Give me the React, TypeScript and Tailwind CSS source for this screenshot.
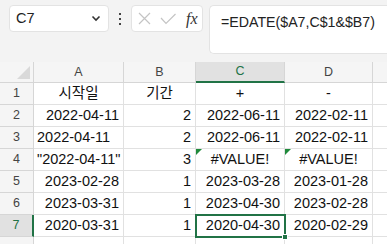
import React from "react";

const GREEN = "#217346";

type Cell = { v: string; align?: "left" | "right" | "center"; err?: boolean };

const rows: Cell[][] = [
  [{ v: "시작일", align: "center" }, { v: "기간", align: "center" }, { v: "+", align: "center" }, { v: "-", align: "center" }],
  [{ v: "2022-04-11", align: "right" }, { v: "2", align: "right" }, { v: "2022-06-11", align: "right" }, { v: "2022-02-11", align: "right" }],
  [{ v: "2022-04-11", align: "left" }, { v: "2", align: "right" }, { v: "2022-06-11", align: "right" }, { v: "2022-02-11", align: "right" }],
  [{ v: "\"2022-04-11\"", align: "left" }, { v: "3", align: "right" }, { v: "#VALUE!", align: "center", err: true }, { v: "#VALUE!", align: "center", err: true }],
  [{ v: "2023-02-28", align: "right" }, { v: "1", align: "right" }, { v: "2023-03-28", align: "right" }, { v: "2023-01-28", align: "right" }],
  [{ v: "2023-03-31", align: "right" }, { v: "1", align: "right" }, { v: "2023-04-30", align: "right" }, { v: "2023-02-28", align: "right" }],
  [{ v: "2020-03-31", align: "right" }, { v: "1", align: "right" }, { v: "2020-04-30", align: "right" }, { v: "2020-02-29", align: "right" }],
];

const widths = ["w-[90px]", "w-[72px]", "w-[89px]", "w-[88px]"];

const alignCls = (a?: string) =>
  a === "right" ? "justify-end pr-[4px]" : a === "center" ? "justify-center" : "justify-start pl-[3px]";

const TopBar = () => (
  <div className="h-[62px] bg-[#f3f3f3] relative flex items-start pt-[5px]">
    {/* name box */}
    <div className="ml-[9px] w-[100px] h-[27px] bg-white border border-[#e3e3e3] rounded-[4px] flex items-center pl-[6px] pr-[7px]">
      <span className="text-[14.5px] text-[#222]">C7</span>
      <svg className="ml-auto" width="10" height="7" viewBox="0 0 10 7">
        <path d="M1.5 1.5 L5 5 L8.5 1.5" fill="none" stroke="#333" strokeWidth="1.6" />
      </svg>
    </div>
    {/* dots */}
    <div className="w-[22px] h-[27px] flex flex-col items-center justify-center gap-[3px]">
      <span className="w-[2px] h-[2px] bg-[#444]" />
      <span className="w-[2px] h-[2px] bg-[#444]" />
      <span className="w-[2px] h-[2px] bg-[#444]" />
    </div>
    {/* buttons */}
    <div className="w-[72px] h-[27px] bg-white border border-[#e3e3e3] rounded-[4px] flex items-center pl-[6px] gap-[9px]">
      <svg width="13" height="13" viewBox="0 0 13 13">
        <path d="M1 1 L12 12 M12 1 L1 12" stroke="#c4c4c4" strokeWidth="1.2" />
      </svg>
      <svg width="16" height="12" viewBox="0 0 16 12">
        <path d="M1 5 L6 10.5 L15.5 1" fill="none" stroke="#c4c4c4" strokeWidth="1.2" />
      </svg>
      <span className="text-[16px] italic text-[#333] ml-[1px]" style={{ fontFamily: '"Liberation Serif", serif' }}>
        fx
      </span>
    </div>
    {/* formula input */}
    <div className="ml-[6px] flex-1 h-[49px] bg-white border border-r-0 border-[#e3e3e3] rounded-l-[5px] pl-[11px] pt-[4px]">
      <span className="text-[14.2px] text-[#222]">=EDATE($A7,C$1&amp;$B7)</span>
    </div>
  </div>
);

export default function App() {
  return (
    <div
      className="w-[387px] h-[244px] overflow-hidden bg-white"
      style={{ fontFamily: '"Liberation Sans", "Noto Sans CJK KR", sans-serif' }}
    >
      <TopBar />
      <div className="relative">
        {/* column header row */}
        <div className="flex h-[21px] bg-[#f5f5f5] text-[12.5px] text-[#444]">
          <div className="w-[34px] shrink-0 border-r border-b border-[#d6d6d6] relative">
            <svg className="absolute left-[17px] top-[4px]" width="13" height="13" viewBox="0 0 13 13">
              <path d="M13 0 L13 13 L0 13 Z" fill="#d9d9d9" />
            </svg>
          </div>
          {["A", "B", "C", "D"].map((c, i) => (
            <div
              key={c}
              className={`${widths[i]} shrink-0 border-r border-[#d6d6d6] flex items-center justify-center ${
                c === "C" ? "bg-[#e1e1e1] text-[#217346] border-b-2 border-b-[#217346]" : "border-b"
              }`}
            >
              {c}
            </div>
          ))}
          <div className="flex-1 border-b border-[#d6d6d6]" />
        </div>

        {rows.map((r, ri) => {
          const sel = ri === 6;
          return (
            <div key={ri} className="flex h-[22px]">
              <div
                className={`w-[34px] shrink-0 border-b border-[#d6d6d6] flex items-center justify-center text-[12.5px] ${
                  sel
                    ? "bg-[#e1e1e1] text-[#217346] border-r-2 border-r-[#217346]"
                    : "bg-[#f5f5f5] text-[#444] border-r"
                }`}
              >
                {ri + 1}
              </div>
              {r.map((c, ci) => (
                <div
                  key={ci}
                  className={`${widths[ci]} shrink-0 relative border-r border-b border-[#e1e1e1] flex items-center whitespace-nowrap text-[14.5px] text-[#111] ${alignCls(
                    c.align
                  )}`}
                >
                  {c.err && (
                    <svg className="absolute left-0 top-0" width="6" height="6" viewBox="0 0 6 6">
                      <path d="M0 0 L6 0 L0 6 Z" fill="#1f8a3b" />
                    </svg>
                  )}
                  <span className={ci === 0 && c.align === "left" ? "overflow-visible" : ""}>{c.v}</span>
                </div>
              ))}
              <div className="flex-1 border-b border-[#e1e1e1]" />
            </div>
          );
        })}
        <div className="flex h-[22px]">
          <div className="w-[34px] shrink-0 bg-[#f5f5f5] border-r border-[#d6d6d6]" />
          {widths.map((w, i) => (
            <div key={i} className={`${w} shrink-0 border-r border-[#e1e1e1]`} />
          ))}
        </div>

        {/* selection C7 */}
        <div
          className="absolute left-[195px] top-[152px] w-[91px] h-[24px] border-2 pointer-events-none"
          style={{ borderColor: GREEN }}
        />
        <div className="absolute left-[282px] top-[172px] w-[6px] h-[6px] bg-[#217346] border border-white" />
      </div>
    </div>
  );
}
